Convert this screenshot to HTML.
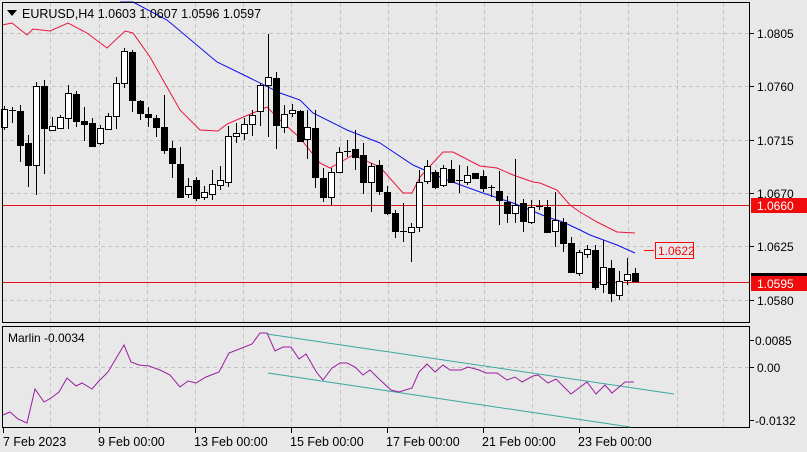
<!DOCTYPE html>
<html><head><meta charset="utf-8"><style>
html,body{margin:0;padding:0;background:#e8e8e8;}
body{width:807px;height:452px;overflow:hidden;position:relative;font-family:"Liberation Sans",sans-serif;}
svg{position:absolute;left:0;top:0;}
</style></head><body>
<svg id="s" width="807" height="452" xmlns="http://www.w3.org/2000/svg" font-family="Liberation Sans, sans-serif" font-size="12">
<rect width="807" height="452" fill="#e8e8e8"/>
<g id="grid" stroke="#c4c4c4" stroke-dasharray="4,3" stroke-width="1"></g>
<!-- horizontal lines -->
<line x1="2" y1="205.5" x2="750" y2="205.5" stroke="#e0101a" stroke-width="1"/>
<line x1="2" y1="282.5" x2="750" y2="282.5" stroke="#e0101a" stroke-width="1"/>
<polyline fill="none" stroke="#e8163c" stroke-width="1" points="2,25 12,23 27,35 33,29 50,31 68,23 87,33 107,48 125,31 133,33 150,57 180,110 200,130 218,131 227,124 267,107 280,120 300,138 320,163 330,168 353,155 380,167 403,193 412,193 420,177 443,152 453,152 480,166 497,168 513,175 533,182 540,183 557,190 570,205 580,212 597,222 617,232 635,233"/>
<polyline fill="none" stroke="#1010e8" stroke-width="1" points="120,2 133,2 167,20 217,62 250,78 280,93 300,100 313,113 347,130 380,143 413,165 447,180 480,192 513,203 547,217 563,222 580,230 590,235 617,245 635,253"/>
<g id="candles"></g>
<!-- frames -->
<rect x="2.5" y="2.5" width="747" height="320" fill="none" stroke="#000"/>
<rect x="2.5" y="326.5" width="747" height="101" fill="none" stroke="#000"/>
<!-- indicator -->
<line x1="3" y1="367.5" x2="749" y2="367.5" stroke="#c4c4c4" stroke-dasharray="4,3"/>
<line x1="267" y1="334" x2="674" y2="394" stroke="#3aa6a0" stroke-width="1"/>
<line x1="268" y1="373" x2="630" y2="427" stroke="#3aa6a0" stroke-width="1"/>
<polyline fill="none" stroke="#9a1ea0" stroke-width="1" points="3,415 10,412 18,419 27,423 35,389 44,402 51,398 59,392 67,378 76,386 82,383 92,389 98,382 108,372 124,345 131,362 139,365 149,366 160,370 170,375 180,387 188,381 196,383 206,377 219,372 229,353 242,348 252,344 260,333 267,333 275,351 283,347 291,347 299,359 306,354 317,373 323,380 332,368 340,363 347,363 355,367 363,375 370,370 378,378 391,390 399,392 412,388 419,372 427,364 435,372 443,365 450,370 461,370 468,367 479,370 486,373 497,373 507,380 515,377 522,382 533,376 538,375 548,383 556,379 571,394 587,382 596,394 605,385 612,393 625,382 634,382"/>
<!-- header -->
<polygon points="7,10 17,10 12,16" fill="#000"/>
<text x="22" y="18" font-size="12.5">EURUSD,H4  1.0603 1.0607 1.0596 1.0597</text>
<text x="8" y="342" font-size="12">Marlin -0.0034</text>
<!-- price axis -->
<g font-size="12" fill="#000">
<line x1="750" y1="33.5" x2="754" y2="33.5" stroke="#000"/><text x="757" y="38">1.0805</text>
<line x1="750" y1="86.5" x2="754" y2="86.5" stroke="#000"/><text x="757" y="91">1.0760</text>
<line x1="750" y1="140.5" x2="754" y2="140.5" stroke="#000"/><text x="757" y="145">1.0715</text>
<line x1="750" y1="193.5" x2="754" y2="193.5" stroke="#000"/><text x="757" y="198">1.0670</text>
<line x1="750" y1="246.5" x2="754" y2="246.5" stroke="#000"/><text x="757" y="251">1.0625</text>
<line x1="750" y1="300.5" x2="754" y2="300.5" stroke="#000"/><text x="757" y="305">1.0580</text>
<rect x="751" y="198" width="56" height="15" fill="#f00c0c"/><text x="757" y="210" fill="#fff">1.0660</text>
<rect x="751" y="273" width="56" height="3" fill="#000"/>
<rect x="751" y="276" width="56" height="15" fill="#f00c0c"/><text x="757" y="288" fill="#fff">1.0595</text>
<line x1="750" y1="340.5" x2="754" y2="340.5" stroke="#000"/><text x="755" y="345">0.0085</text>
<line x1="750" y1="367.5" x2="754" y2="367.5" stroke="#000"/><text x="757" y="372">0.00</text>
<line x1="750" y1="420.5" x2="754" y2="420.5" stroke="#000"/><text x="755" y="425">-0.0132</text>
</g>
<!-- label 1.0622 -->
<line x1="644" y1="250.5" x2="654" y2="250.5" stroke="#f00c0c"/>
<rect x="655.5" y="242.5" width="38" height="16" fill="#e8e8e8" stroke="#f00c0c"/>
<text x="658" y="255" fill="#f00c0c" font-size="12">1.0622</text>
<!-- time axis -->
<g font-size="12.5" fill="#000" id="taxis">
<text x="3" y="446">7 Feb 2023</text>
<text x="98" y="446">9 Feb 00:00</text>
<text x="194" y="446">13 Feb 00:00</text>
<text x="290" y="446">15 Feb 00:00</text>
<text x="386" y="446">17 Feb 00:00</text>
<text x="482" y="446">21 Feb 00:00</text>
<text x="578" y="446">23 Feb 00:00</text>
</g>
</svg>
<script>
var ns="http://www.w3.org/2000/svg";
function el(p,t,a){var e=document.createElementNS(ns,t);for(var k in a)e.setAttribute(k,a[k]);p.appendChild(e);return e;}
var g=document.getElementById('grid');
var vx=[50,99,147,195,243,291,340,388,436,484,532,580,628,677,723];
vx.forEach(function(x){el(g,'line',{x1:x+.5,y1:3,x2:x+.5,y2:322});el(g,'line',{x1:x+.5,y1:327,x2:x+.5,y2:427});});
[33,86,140,193,246,300].forEach(function(y){el(g,'line',{x1:3,y1:y+.5,x2:749,y2:y+.5});});
var s=document.getElementById('s');
[3,99,195,291,387,483,579].forEach(function(x){el(s,'line',{x1:x+.5,y1:428,x2:x+.5,y2:433,stroke:'#000'});});
// x, o, c, h, l (pixel y)
var C=[[4,127,109,106,130],[12,110,110,107,123],[20,111,145,105,162],[28,143,165,135,187],[36,165,86,82,195],[44,86,128,80,174],[52,130,126,117,131],[60,128,117,115,129],[68,118,93,85,129],[76,94,121,91,127],[84,121,124,107,141],[92,123,146,118,147],[100,143,128,125,145],[108,129,116,113,129],[116,116,83,77,129],[124,83,51,48,88],[132,52,100,50,112],[140,101,113,100,120],[148,114,117,107,127],[156,118,127,115,137],[164,127,150,95,154],[172,148,163,141,178],[180,164,197,147,198],[188,194,186,178,198],[196,180,198,177,201],[204,197,192,186,200],[212,194,184,170,200],[220,185,180,166,190],[228,182,136,126,187],[236,136,133,123,143],[244,133,124,118,140],[252,124,115,110,136],[260,111,85,83,126],[268,85,77,34,137],[276,78,125,72,149],[284,127,114,105,133],[292,113,110,104,117],[300,111,141,110,142],[307,139,127,110,159],[315,128,177,110,188],[323,178,197,168,202],[331,197,172,168,205],[339,172,152,147,173],[347,151,151,140,157],[355,149,157,130,170],[363,155,182,143,194],[371,182,166,163,212],[379,165,191,160,195],[387,192,213,186,215],[395,213,231,210,238],[403,231,231,203,242],[411,232,227,223,262],[419,227,182,170,232],[427,181,166,160,184],[435,172,187,170,189],[443,185,168,165,187],[451,169,182,160,183],[459,180,180,165,193],[467,182,175,166,185],[475,173,178,173,178],[483,176,188,170,192],[491,187,187,185,197],[499,191,200,171,225],[507,202,213,196,223],[515,213,205,159,223],[523,203,221,199,232],[531,222,207,200,224],[539,206,206,200,210],[547,207,232,200,233],[555,231,220,192,247],[563,222,243,218,252],[571,243,272,237,273],[579,273,252,250,276],[587,254,249,245,258],[595,250,287,245,290],[603,284,267,240,293],[611,268,293,260,302],[619,295,281,271,300],[627,280,274,258,285],[635,273,281,268,282]];
var cg=document.getElementById('candles');
C.forEach(function(c){var x=c[0],o=c[1],cl=c[2],h=c[3],l=c[4];
el(cg,'line',{x1:x+.5,y1:h,x2:x+.5,y2:l,stroke:'#000'});
var t=Math.min(o,cl),b=Math.max(o,cl);
if(b-t<1){el(cg,'line',{x1:x-3,y1:t+.5,x2:x+4,y2:t+.5,stroke:'#000'});}
else if(cl<o){el(cg,'rect',{x:x-2.5,y:t+.5,width:6,height:b-t,fill:'#fff',stroke:'#000'});}
else{el(cg,'rect',{x:x-3,y:t,width:7,height:b-t+1,fill:'#000'});}
});
</script>
</body></html>
